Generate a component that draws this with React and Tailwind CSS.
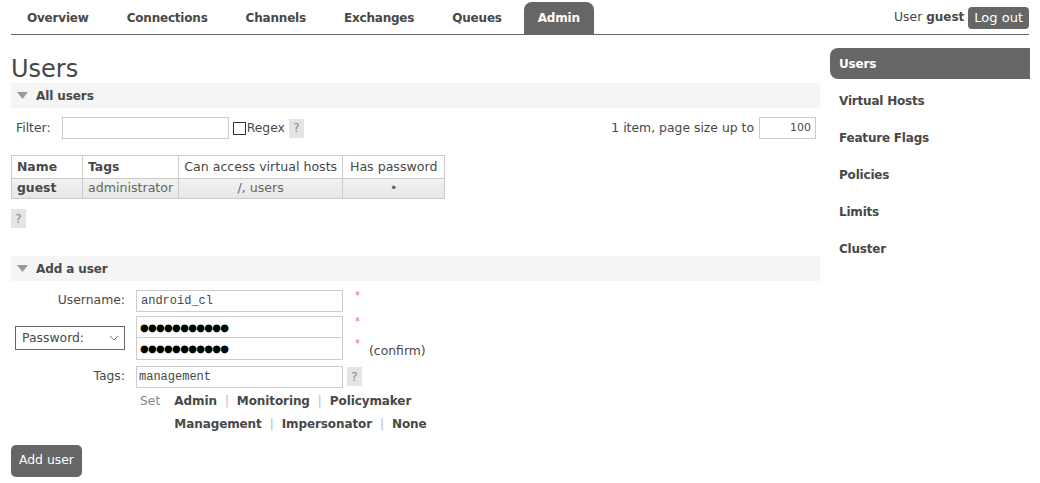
import React from 'react';

const tabs = ['Overview', 'Connections', 'Channels', 'Exchanges', 'Queues', 'Admin'];
const side = ['Users', 'Virtual Hosts', 'Feature Flags', 'Policies', 'Limits', 'Cluster'];

function Help({ className = '' }) {
  return (
    <span className={`inline-flex h-[19px] w-[15px] items-center justify-center bg-[#e4e4e4] text-[12px] text-[#888] ${className}`}>?</span>
  );
}

function SectionHead({ title }) {
  return (
    <div className="flex h-[25px] items-center bg-[#f5f5f5] pl-[6px]">
      <svg width="11" height="7" viewBox="0 0 11 7" className="mr-[8px]">
        <path d="M0 0 L11 0 L5.5 7 Z" fill="#999" />
      </svg>
      <span className="text-[12px] font-bold tracking-[-0.1px] text-[#484848]">{title}</span>
    </div>
  );
}

function Sep() {
  return <span className="mx-[8px] font-normal text-[#bbb]">|</span>;
}

export default function App() {
  return (
    <div className="relative h-[483px] w-[1040px] overflow-hidden bg-white text-[12.4px] text-[#484848]" style={{ fontFamily: '"DejaVu Sans", Verdana, sans-serif' }}>
      {/* header */}
      <div className="mx-[11px] flex h-[35px] items-end border-b border-[#666]">
        <div className="flex h-[32px] items-stretch">
          {tabs.map((t) => (
            <div
              key={t}
              className={`flex items-center rounded-t-[8px] text-[12px] font-bold tracking-[-0.2px] ${t === 'Admin' ? 'bg-[#666] px-[14px] text-white' : 'mr-[6px] px-[16px] text-[#484848]'}`}
            >
              {t}
            </div>
          ))}
        </div>
        <div className="ml-auto flex items-center self-start pt-[7px]">
          <span>User <b className="text-[12px]">guest</b></span>
          <span className="ml-[4px] rounded-[4px] bg-[#666] px-[6px] py-[1px] text-[13px] text-white">Log out</span>
        </div>
      </div>

      <div className="flex">
        {/* main */}
        <div className="ml-[11px] w-[809px]">
          <h1 className="mt-[20px] h-[28px] text-[24px] leading-[28px] text-[#484848]">Users</h1>
          <SectionHead title="All users" />

          <div className="mt-[9px] flex items-center">
            <span className="ml-[5px]">Filter:</span>
            <span className="ml-[11px] h-[22px] w-[167px] border border-[#ccc] bg-white" />
            <span className="ml-[4px] h-[13px] w-[13px] border border-[#333]" />
            <span className="ml-[1px]">Regex</span>
            <Help className="ml-[4px]" />
            <span className="ml-auto">1 item, page size up to</span>
            <span className="ml-[5px] mr-[4px] flex h-[22px] w-[57px] items-center justify-end border border-[#ccc] pr-[4px] text-[11px]">100</span>
          </div>

          <table className="mt-[16px] border-collapse whitespace-nowrap">
            <thead>
              <tr className="h-[23px] text-[12.6px]">
                <th className="w-[71px] border border-[#ccc] px-[5px] text-left text-[12.4px] font-bold">Name</th>
                <th className="w-[95px] border border-[#ccc] px-[5px] text-left text-[12.4px] font-bold">Tags</th>
                <th className="w-[164px] border border-[#ccc] px-[3px] font-normal">Can access virtual hosts</th>
                <th className="w-[102px] border border-[#ccc] px-[3px] font-normal">Has password</th>
              </tr>
            </thead>
            <tbody>
              <tr className="h-[20px] bg-gradient-to-b from-[#f2f2f2] to-[#e6e6e6] text-[12.6px]">
                <td className="border border-[#ccc] px-[5px] text-[12.4px] font-bold">guest</td>
                <td className="border border-[#ccc] px-[5px] text-[#666]">administrator</td>
                <td className="border border-[#ccc] px-[5px] text-center text-[#666]">/, users</td>
                <td className="border border-[#ccc] px-[5px] text-center text-[#666]">•</td>
              </tr>
            </tbody>
          </table>

          <Help className="mt-[10px]" />

          <div className="mt-[28px]">
            <SectionHead title="Add a user" />
          </div>

          <div className="mt-[9px] grid grid-cols-[114px_auto] gap-x-[11px]">
            <div className="flex h-[21px] items-center justify-end">Username:</div>
            <div className="flex items-start">
              <span className="flex h-[22px] w-[207px] items-center border border-[#ccc] px-[4px] text-[12px]" style={{ fontFamily: '"Liberation Mono", monospace' }}>android_cl</span>
              <span className="ml-[12px] text-[10px] leading-[12px] text-[#f66]">*</span>
            </div>

            <div className="mt-[4px] flex items-center pl-[4px]">
              <span className="flex h-[24px] w-[110px] items-center justify-between border border-[#666] pl-[6px] pr-[5px]">
                Password:
                <svg width="10" height="6" viewBox="0 0 10 6"><path d="M1 1 L5 5 L9 1" stroke="#777" fill="none" /></svg>
              </span>
            </div>
            <div className="mt-[4px] flex flex-col">
              <div className="flex items-start">
                <span className="flex h-[22px] w-[207px] items-center border border-[#ccc] px-[3px] text-[10px] tracking-[-0.7px] text-black">●●●●●●●●●●●</span>
                <span className="ml-[12px] text-[10px] leading-[12px] text-[#f66]">*</span>
              </div>
              <div className="flex items-start">
                <span className="flex h-[22px] w-[207px] items-center border border-t-0 border-[#ccc] px-[3px] text-[10px] tracking-[-0.7px] text-black">●●●●●●●●●●●</span>
                <span className="ml-[12px] text-[10px] leading-[12px] text-[#f66]">*</span>
                <span className="ml-[9px] mt-[4px]">(confirm)</span>
              </div>
            </div>

            <div className="mt-[5px] flex h-[22px] items-center justify-end">Tags:</div>
            <div className="mt-[5px] flex flex-col">
              <div className="flex items-center">
                <span className="flex h-[22px] w-[207px] items-center border border-[#ccc] px-[2px] text-[12px]" style={{ fontFamily: '"Liberation Mono", monospace' }}>management</span>
                <Help className="ml-[4px]" />
              </div>
              <div className="mt-[4px] flex">
                <span className="ml-[4px] text-[#888]">Set</span>
                <div className="ml-[14px] flex flex-col gap-y-[5px] text-[12px] font-bold tracking-[-0.1px]">
                  <div className="flex items-center">
                    <span>Admin</span><Sep />
                    <span>Monitoring</span><Sep />
                    <span>Policymaker</span>
                  </div>
                  <div className="flex items-center">
                    <span>Management</span><Sep />
                    <span>Impersonator</span><Sep />
                    <span>None</span>
                  </div>
                </div>
              </div>
            </div>
          </div>

          <button className="mt-[12px] h-[32px] rounded-[5px] bg-[#666] px-[8px] text-[12.4px] text-white">Add user</button>
        </div>

        {/* sidebar */}
        <div className="ml-[10px] mt-[13px] w-[200px]">
          {side.map((s) => (
            <div
              key={s}
              className={`mb-[6px] flex h-[31px] items-center pl-[9px] text-[12px] font-bold tracking-[-0.2px] ${s === 'Users' ? 'rounded-l-[8px] bg-[#666] text-white' : 'text-[#484848]'}`}
            >
              {s}
            </div>
          ))}
        </div>
      </div>
    </div>
  );
}
